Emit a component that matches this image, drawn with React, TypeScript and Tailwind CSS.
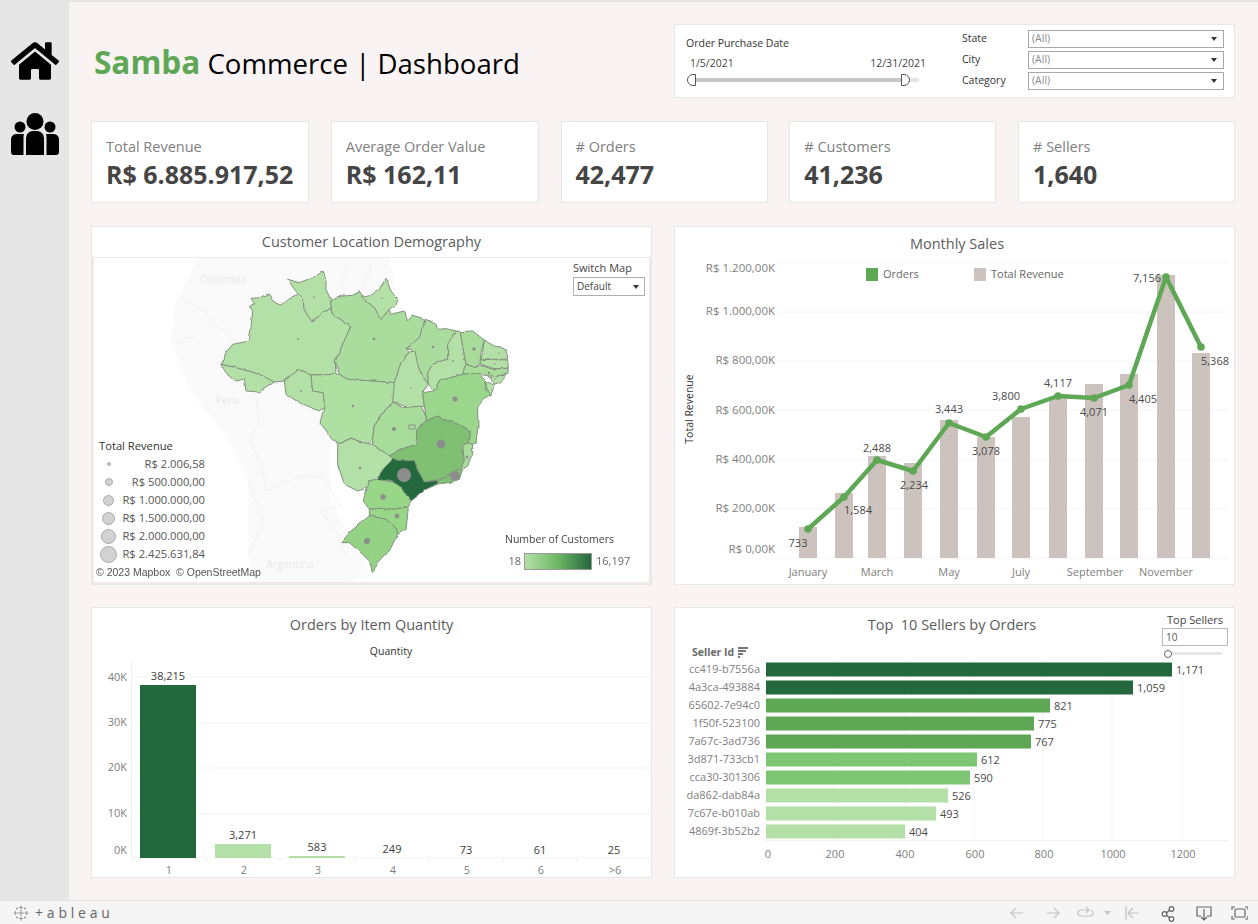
import { FaHome } from 'react-icons/fa';

const kpis = [
    { label: 'Total Revenue', value: 'R$ 6.885.917,52', w: 'w-[218px]' },
    { label: 'Average Order Value', value: 'R$ 162,11', w: 'w-[208px]' },
    { label: '# Orders', value: '42,477', w: 'w-[207px]' },
    { label: '# Customers', value: '41,236', w: 'w-[207px]' },
    { label: '# Sellers', value: '1,640', w: 'w-[217px]' },
];

const Caret = () => <span className="h-0 w-0 border-x-[3px] border-t-[4px] border-x-transparent border-t-[#333]" />;

const FilterSelect = ({ label }: { label: string }) => (
    <div className="flex h-[21px] items-center">
        <span className="w-[66px] text-[10.5px] text-[#333]">{label}</span>
        <div className="flex h-[18px] w-[196px] items-center justify-between border border-[#a8a8a8] pl-[3px] pr-[6px] text-[10.5px] text-[#8a8a8a]">
            <span className="pt-[1px]">(All)</span>
            <Caret />
        </div>
    </div>
);

const Handle = ({ flip }: { flip?: boolean }) => (
    <svg width="10" height="12" viewBox="0 0 10 12" className={flip ? '' : '-scale-x-100'}>
        <path d="M1.5.5h2.5a5 5 0 0 1 0 11H1.500z" fill="#fff" stroke="#555" />
    </svg>
);

const FilterBox = () => (
    <div className="flex h-[74px] w-[561px] border border-[#e6e6e6] bg-white">
        <div className="w-[287px] pl-[11px] pt-[11px]">
            <div className="text-[10.500px] leading-[14px] text-[#333]">Order Purchase Date</div>
            <div className="mt-[7px] flex w-[240px] justify-between pl-[4px] text-[10.500px] leading-[13px] text-[#444]">
                <span>1/5/2021</span>
                <span>12/31/2021</span>
            </div>
            <div className="relative mt-[8px] h-[4px] w-[226px] translate-x-[7px] bg-[#e6e6e6]">
                <div className="h-full w-[212px] bg-[#c8c8c8]" />
                <div className="absolute -left-[6px] -top-[4px] flex"><Handle /></div>
                <div className="absolute left-[207px] -top-[4px] flex"><Handle flip /></div>
            </div>
        </div>
        <div className="pt-[3px]">
            <FilterSelect label="State" />
            <FilterSelect label="City" />
            <FilterSelect label="Category" />
        </div>
    </div>
);

const Kpi = ({ label, value, w }: { label: string; value: string; w: string }) => (
    <div className={`h-[82px] border border-[#e6e6e6] bg-white pl-[14px] pt-[14px] ${w}`}>
        <div className="text-[14.500px] leading-[22px] text-[#808080]">{label}</div>
        <div className="text-[25px] font-bold leading-[33px] text-[#454545]">{value}</div>
    </div>
);

const Card = ({ title, titleH = 'h-[34px]', titlePad = '', h, children }: { title: string; titleH?: string; titlePad?: string; h: string; children: React.ReactNode }) => (
    <section className={`relative w-[561px] border border-[#e6e6e6] bg-white ${h}`}>
        <h2 className={`flex items-center justify-center whitespace-pre pb-[1px] text-[14.500px] font-normal text-[#5c5c5c] ${titleH} ${titlePad}`}>{title}</h2>
        {children}
    </section>
);

// state outlines traced from the reference, first group in one crop's coordinates, second in another
const northStates = [
    { f: '#b3e0a6', p: '105,97 135,95 160,87 170,105 195,117 215,100 250,87 262,100 265,135 287,165 310,150 345,125 350,145 405,180 358,285 360,325 285,327 265,320 245,310 205,345 175,348 130,325 60,305 15,295 30,260 50,235 100,225 105,180 110,135 100,122 115,112' },
    { f: '#b3e0a6', p: '15,295 60,305 130,325 175,348 130,378 90,375 85,340 60,345 30,320' },
    { f: '#b3e0a6', p: '215,40 250,50 290,35 318,18 330,45 330,70 345,103 345,125 310,150 287,165 265,135 262,100 250,87 235,70' },
    { f: '#b3e0a6', p: '435,90 470,85 490,70 510,37 525,75 545,100 540,115 520,130 495,160 475,125 450,105' },
    { f: '#aadd9d', p: '345,103 380,90 410,88 430,77 435,90 450,105 475,125 495,160 520,130 525,145 565,135 575,165 590,148 630,160 610,215 570,250 580,258 555,290 535,350 470,345 395,340 370,325 358,285 405,180 350,145 345,125' },
    { f: '#aadd9d', p: '630,160 660,175 665,190 690,188 722,195 695,235 695,280 650,295 635,320 637,355 615,325 605,295 585,250 570,250 610,215' },
    { f: '#b3e0a6', p: '580,258 597,255 605,295 615,325 637,355 620,380 625,420 595,430 565,420 530,410 530,370 535,350 555,290' },
    { f: '#b3e0a6', p: '722,195 733,197 740,240 750,295 740,325 705,335 670,345 655,375 637,355 635,320 650,295 695,280 695,235' },
    { f: '#a8dc9b', p: '733,197 770,195 805,222 795,260 792,295 780,305 750,295 740,240' },
    { f: '#b3e0a6', p: '805,222 835,240 865,245 875,270 875,280 835,280 795,278 800,260' },
    { f: '#b3e0a6', p: '792,280 875,282 877,305 845,310 825,305 795,295' },
    { f: '#a8dc9b', p: '750,295 780,305 795,298 825,308 877,308 875,325 840,330 820,330 790,325 765,322 740,325' },
    { f: '#b3e0a6', p: '825,330 870,328 855,350 835,358' },
    { f: '#b3e0a6', p: '810,345 835,358 825,385 810,370' },
    { f: '#9ad78c', p: '740,325 765,322 790,325 810,345 810,370 825,385 800,400 785,425 786,480 783,505 780,530 770,535 755,530 763,495 730,475 695,465 665,450 630,465 630,450 625,420 620,380 655,375 670,345 705,335' },
    { f: '#b3e0a6', p: '245,310 265,320 285,327 290,375 322,380 325,420 310,435 250,410 210,385 205,345' },
    { f: '#aee0a1', p: '285,327 360,325 370,325 395,340 535,350 530,410 510,429 474,480 471,516 456,534 405,516 375,531 360,531 312,471 325,420 322,380 290,375' },
];

const southStates = [
    { f: '#a8dc9b', p: '185,5 215,20 270,15 285,45 285,60 258,85 255,130 210,145 175,165 125,130 125,110 130,75 165,25' },
    { f: '#b3e0a6', p: '20,130 60,112 110,128 125,130 175,165 185,175 160,200 135,235 115,240 105,262 80,270 40,250 20,190' },
    { f: '#7fc073', p: '175,165 210,145 255,130 258,85 285,60 320,45 350,60 385,70 418,90 410,125 395,135 400,180 390,200 365,215 345,225 320,235 280,243 262,210 250,178 215,180 185,175' },
    { f: '#a8dc9b', p: '410,125 425,130 425,160 410,195 395,205 390,200 400,180 395,135' },
    { f: '#7fc073', p: '320,235 345,225 365,215 390,200 395,205 385,235 350,245 320,250' },
    { f: '#24693d', p: '185,175 215,180 250,178 262,210 280,243 320,238 318,250 285,265 260,285 240,300 205,255 185,243 135,235 160,200' },
    { f: '#98d688', p: '135,235 185,243 205,255 240,300 232,315 190,325 150,322 115,325 97,300 105,262 115,240' },
    { f: '#98d688', p: '115,325 150,322 190,325 232,318 228,360 225,385 200,400 195,380 165,355 115,345' },
    { f: '#94d385', p: '115,345 165,355 195,380 200,400 180,440 135,490 125,515 115,480 90,455 55,425 30,425 60,390 90,365' },
];

const revenueDots: [number, number, number][] = [
    [440, 443, 4.4], [403, 474, 7], [454, 475, 5], [382, 496, 2.7], [396, 515, 2.3], [366, 540, 3], [454, 398, 2.500], [393, 428, 2],
    [466, 456, 1.500], [359, 467, 1.200], [352, 405, 1.200], [373, 338, 1.300], [297, 338, 0.900], [473, 348, 1.800], [432, 346, 1.300],
    [452, 360, 0.900], [300, 390, 0.900], [313, 296, 0.800], [381, 297, 0.800], [244, 377, 0.500], [410, 387, 0.800], [488, 372, 1.300],
    [498, 352, 0.800], [494, 363, 0.800], [494, 378, 0.800], [486, 387, 0.800],
];

const sizeLegend = [
    { v: 'R$ 2.006,58', r: 'size-[4px]', pad: 'pl-[8px]' },
    { v: 'R$ 500.000,00', r: 'size-[8px]', pad: 'pl-[6px]' },
    { v: 'R$ 1.000.000,00', r: 'size-[11px]', pad: 'pl-[4px]' },
    { v: 'R$ 1.500.000,00', r: 'size-[13px]', pad: 'pl-[3px]' },
    { v: 'R$ 2.000.000,00', r: 'size-[15px]', pad: 'pl-[2px]' },
    { v: 'R$ 2.425.631,84', r: 'size-[17px]', pad: 'pl-[1px]' },
];

const MapPanel = () => (
    <div className="relative h-[327px] border-2 border-t border-[#efe9e9] overflow-hidden">
        <svg viewBox="93 257 557 324" width="557" height="324" className="block">
            <defs>
                <filter id="rough" x="-5%" y="-5%" width="110%" height="110%" colorInterpolationFilters="sRGB">
                    <feTurbulence type="fractalNoise" baseFrequency="0.11" numOctaves="2" seed="4" />
                    <feDisplacementMap in="SourceGraphic" scale="3" xChannelSelector="R" yChannelSelector="G" />
                </filter>
            </defs>
            <path d="M197 257 173 305 170 342 190 392 223 432 247 478 247 558 257 584H335L370 573 330 500V400L360 300 395 285 388 257Z" fill="#fafafa" />
            <g fill="none" stroke="#f1f1f1">
                <path d="M183 300 205 310 210 320 195 335 172 342M210 320 235 340 250 350" />
                <path d="M255 395 258 420 250 440 262 470 265 490 300 475 322 476 340 505 320 510 335 530 345 555" />
                <path d="M247 478 262 520 248 555M340 285 347 262M370 265 362 285" />
            </g>
            <g className="text-[10.500px]" fill="#e8e8e8">
                <text x="199" y="282">Colombia</text>
                <text x="215" y="403">Peru</text>
                <text x="265" y="567">Argentina</text>
            </g>
            <g filter="url(#rough)">
                <g stroke="#84907f" strokeWidth="3" strokeLinejoin="round" transform="translate(215 265) scale(0.3333)">
                    {northStates.map((s) => <polygon key={s.p} points={s.p} fill={s.f} />)}
                </g>
                <g stroke="#84907f" strokeWidth="3" strokeLinejoin="round" transform="translate(330 400) scale(0.3333)">
                    {southStates.map((s) => <polygon key={s.p} points={s.p} fill={s.f} />)}
                </g>
            </g>
            <rect x="408" y="424" width="6" height="4" fill="none" stroke="#888" strokeWidth="0.800" />
            {revenueDots.map(([x, y, r]) => <circle key={`${x}-${y}`} cx={x} cy={y} r={r} fill="#8d8d8d" />)}
        </svg>
        <div className="absolute left-[5px] top-[181px] w-[106px] text-[11.200px] text-[#555]">
            <div className="leading-[14px] text-[#333]">Total Revenue</div>
            <div className="mt-[2px]">
                {sizeLegend.map((row) => (
                    <div key={row.v} className={`flex h-[18px] items-center justify-between whitespace-nowrap ${row.pad}`}>
                        <span className={`rounded-full border border-[#aaa] bg-[#d2d2d2] ${row.r}`} />
                        <span>{row.v}</span>
                    </div>
                ))}
            </div>
        </div>
        <div className="absolute right-[4px] top-[3px] w-[72px] text-[11px] text-[#444]">
            <div className="leading-[14px]">Switch Map</div>
            <div className="mt-[2px] flex h-[19px] items-center justify-between border border-[#b0b0b0] bg-white px-[3px] pr-[5px] text-[10px]">
                Default
                <Caret />
            </div>
        </div>
        <div className="absolute left-[411px] top-[274px] text-[10.500px] text-[#444]">
            <div className="leading-[14px]">Number of Customers</div>
            <div className="mt-[7px] flex h-[17px] items-center text-[11px] text-[#666]">
                <span className="w-[16px] text-right">18</span>
                <span className="ml-[3px] mr-[4px] h-[17px] w-[68px] border border-[#999] bg-gradient-to-r from-[#b3e0a6] via-[#6cb665] to-[#24693d]" />
                <span>16,197</span>
            </div>
        </div>
        <div className="absolute bottom-[1px] left-[2px] font-['Liberation_Sans',sans-serif] text-[10.500px] text-[#555]">© 2023 Mapbox&nbsp; © OpenStreetMap</div>
    </div>
);

const months = [
    { x: 808, top: 527, ly: 529, n: '733', nx: 798, ny: 544 },
    { x: 844, top: 493, ly: 497, n: '1,584', nx: 858, ny: 511 },
    { x: 877, top: 456, ly: 460, n: '2,488', nx: 877, ny: 449 },
    { x: 913, top: 463, ly: 471, n: '2,234', nx: 914, ny: 486 },
    { x: 949, top: 420, ly: 423, n: '3,443', nx: 949, ny: 410 },
    { x: 986, top: 437, ly: 437, n: '3,078', nx: 986, ny: 452 },
    { x: 1021, top: 417, ly: 409, n: '3,800', nx: 1006, ny: 397 },
    { x: 1058, top: 397, ly: 396, n: '4,117', nx: 1058, ny: 384 },
    { x: 1094, top: 384, ly: 398, n: '4,071', nx: 1094, ny: 413 },
    { x: 1129, top: 374, ly: 385, n: '4,405', nx: 1143, ny: 400 },
    { x: 1166, top: 275, ly: 277, n: '7,156', nx: 1147, ny: 279 },
    { x: 1201, top: 353, ly: 347, n: '5,368', nx: 1215, ny: 362 },
];

const salesAxis = [
    { v: 'R$ 1.200,00K', label: 269, grid: 262 },
    { v: 'R$ 1.000,00K', label: 312, grid: 312 },
    { v: 'R$ 800,00K', label: 361, grid: 361 },
    { v: 'R$ 600,00K', label: 411, grid: 410 },
    { v: 'R$ 400,00K', label: 460, grid: 460 },
    { v: 'R$ 200,00K', label: 509, grid: 509 },
    { v: 'R$ 0,00K', label: 550, grid: 558 },
];

const MonthlySales = () => (
    <svg viewBox="675 261 559 323" width="559" height="323" className="block text-[11px]" dominantBaseline="middle">
        {salesAxis.map((a) => (
            <g key={a.v}>
                <line x1="776" x2="1229" y1={a.grid} y2={a.grid} stroke="#f4f4f4" />
                <text x="775" y={a.label} textAnchor="end" fill="#808080" className="text-[11.500px]">{a.v}</text>
            </g>
        ))}
        <text transform="translate(690 409) rotate(-90)" textAnchor="middle" fill="#333" className="text-[10.500px]">Total Revenue</text>
        {months.map((m) => <rect key={m.x} x={m.x - 9} y={m.top} width="18" height={558 - m.top} fill="#ccc3bf" />)}
        <polyline points={months.map((m) => `${m.x},${m.ly}`).join(' ')} fill="none" stroke="#5ea855" strokeWidth="4.500" strokeLinejoin="round" />
        {months.map((m) => <circle key={m.x} cx={m.x} cy={m.ly} r="3.800" fill="#5ea855" />)}
        {months.map((m) => <text key={m.n} x={m.nx} y={m.ny} textAnchor="middle" fill="#4a4a4a">{m.n}</text>)}
        {[['January', 808], ['March', 877], ['May', 949], ['July', 1021], ['September', 1095], ['November', 1166]].map(([t, x]) => (
            <text key={t} x={x} y="573" textAnchor="middle" fill="#808080">{t}</text>
        ))}
        <rect x="866" y="268" width="12" height="13" fill="#5ea855" />
        <text x="883" y="275" fill="#666">Orders</text>
        <rect x="974" y="268" width="12" height="13" fill="#ccc3bf" />
        <text x="991" y="275" fill="#666">Total Revenue</text>
    </svg>
);

const quantities = [
    { l: '1', x: 168, n: '38,215', top: 685, ny: 677, c: '#24693d' },
    { l: '2', x: 243, n: '3,271', top: 844, ny: 836, c: '#b3e0a6' },
    { l: '3', x: 317, n: '583', top: 856, ny: 848, c: '#b3e0a6' },
    { l: '4', x: 392, n: '249', top: 858, ny: 850, c: '#b3e0a6' },
    { l: '5', x: 466, n: '73', top: 858, ny: 851, c: '#b3e0a6' },
    { l: '6', x: 540, n: '61', top: 858, ny: 851, c: '#b3e0a6' },
    { l: '>6', x: 614, n: '25', top: 858, ny: 851, c: '#b3e0a6' },
];

const OrdersByQuantity = () => (
    <svg viewBox="92 642 559 235" width="559" height="235" className="block text-[11px]" dominantBaseline="middle">
        <text x="391" y="652" textAnchor="middle" fill="#333" className="text-[10.500px]">Quantity</text>
        <line x1="131.500" x2="131.500" y1="660" y2="858" stroke="#f0f0f0" />
        {[['40K', 677, 678], ['30K', 723, 723], ['20K', 768, 768], ['10K', 814, 814], ['0K', 858, 851]].map(([t, g, y]) => (
            <g key={t}>
                <line x1="132" x2="651" y1={g} y2={g} stroke="#f3f3f3" />
                <text x="127" y={y} textAnchor="end" fill="#808080">{t}</text>
            </g>
        ))}
        {[132, 206, 280, 355, 429, 503, 577].map((x) => <line key={x} x1={x} x2={x} y1="858" y2="862" stroke="#eeeeee" />)}
        {quantities.map((q) => (
            <g key={q.l}>
                <rect x={q.x - 28} y={q.top} width="56" height={858 - q.top} fill={q.c} />
                <text x={q.x} y={q.ny} textAnchor="middle" fill="#3c3c3c">{q.n}</text>
                <text x={q.x + 1} y="871" textAnchor="middle" fill="#808080">{q.l}</text>
            </g>
        ))}
    </svg>
);

const sellers = [
    { id: 'cc419-b7556a', n: '1,171', end: 1172, c: '#24693d' },
    { id: '4a3ca-493884', n: '1,059', end: 1133, c: '#24693d' },
    { id: '65602-7e94c0', n: '821', end: 1050, c: '#5ea855' },
    { id: '1f50f-523100', n: '775', end: 1034, c: '#5ea855' },
    { id: '7a67c-3ad736', n: '767', end: 1031, c: '#5ea855' },
    { id: '3d871-733cb1', n: '612', end: 977, c: '#7fc674' },
    { id: 'cca30-301306', n: '590', end: 970, c: '#7fc674' },
    { id: 'da862-dab84a', n: '526', end: 948, c: '#b3e0a6' },
    { id: '7c67e-b010ab', n: '493', end: 936, c: '#b3e0a6' },
    { id: '4869f-3b52b2', n: '404', end: 905, c: '#b3e0a6' },
];

const TopSellers = () => (
    <svg viewBox="675 642 559 235" width="559" height="235" className="block text-[11px]" dominantBaseline="middle">
        <text x="692" y="653" fill="#6a6a6a" className="font-bold text-[10.500px]">Seller Id</text>
        <path d="M738 648h10M738 651h8M738 654h5M738 657h2" stroke="#777" strokeWidth="1.800" />
        {[835, 905, 974, 1043, 1112, 1182].map((x) => <line key={x} x1={x} x2={x} y1="660" y2="840" stroke="#f3f3f3" />)}
        <line x1="766" x2="1229" y1="840.500" y2="840.500" stroke="#efefef" />
        {sellers.map((s, i) => {
            const y = 669.500 + i * 18;
            return (
                <g key={s.id}>
                    <text x="760" y={y + 1} textAnchor="end" fill="#808080">{s.id}</text>
                    <rect x="766" y={y - 7} width={s.end - 766} height="14" fill={s.c} />
                    <text x={s.end + 4} y={y + 2} fill="#4a4a4a">{s.n}</text>
                </g>
            );
        })}
        {[['0', 768], ['200', 835], ['400', 905], ['600', 975], ['800', 1044], ['1000', 1113], ['1200', 1183]].map(([t, x]) => (
            <text key={t} x={x} y="855" textAnchor="middle" fill="#808080">{t}</text>
        ))}
    </svg>
);

const TopSellersControl = () => (
    <div className="absolute right-[6px] top-[5px] w-[66px] text-[11px] text-[#444]">
        <div className="text-center leading-[14px]">Top Sellers</div>
        <div className="mt-[1px] flex h-[18px] items-center border border-[#b8b8b8] pl-[3px] text-[10px] text-[#555]">10</div>
        <div className="relative mt-[6px] ml-[9px] h-[3px] w-[51px] bg-[#e6e6e6]">
            <span className="absolute -left-[7px] -top-[2px] size-[8px] rounded-full border border-[#666] bg-white" />
        </div>
    </div>
);

const UsersIcon = () => (
    <svg width="48" height="42" viewBox="0 0 48 42" fill="#000">
        <circle cx="9" cy="14" r="5.500" />
        <circle cx="39" cy="14" r="5.500" />
        <circle cx="24" cy="8.500" r="8.500" />
        <path d="M0 26a6 6 0 0 1 6-5h7a12 12 0 0 0-.5 3v18H3a3 3 0 0 1-3-3zM48 26a6 6 0 0 0-6-5h-7a12 12 0 0 1 .5 3v18H45a3 3 0 0 0 3-3z" />
        <path d="M15 25a7 7 0 0 1 7-7h4a7 7 0 0 1 7 7v17H15z" />
    </svg>
);

const TableauMark = () => (
    <svg width="16" height="16" viewBox="0 0 16 16" stroke="#9a9a9a" strokeWidth="1" fill="none">
        <path d="M8 5v6M5 8h6M8 .5v4M6 2.500h4M8 11.500v4M6 13.500h4M.5 8h4M2.500 6v4M11.500 8h4M13.500 6v4M3 3.500h2M4 2.500v2M11 3.500h2M12 2.500v2M3 12.500h2M4 11.500v2M11 12.500h2M12 11.500v2" />
    </svg>
);

const Toolbar = () => (
    <footer className="flex h-[24px] items-center justify-between border-t border-[#e2e2e2] bg-[#f5f5f5] pl-[13px] pr-[10px]">
        <div className="flex items-center gap-[6px]">
            <TableauMark />
            <span className="text-[14px] leading-none tracking-[3.800px] text-[#666]">+ableau</span>
        </div>
        <svg width="238" height="20" viewBox="1010 902 238 20" fill="none" stroke="#c4c4c4" strokeWidth="1.200">
            <path d="M1023 912h-12m5-5-5 5 5 5" />
            <path d="M1047 912h12m-5-5 5 5-5 5" />
            <path d="M1088 909h-7a3 3 0 0 0 0 6h9a3 3 0 0 0 3-3v0a3 3 0 0 0-2-3M1086 906l3 3-3 3" />
            <path d="M1104 910h7l-3.500 4z" fill="#c4c4c4" stroke="none" />
            <path d="M1126 905v14M1139 912h-11m5-5-5 5 5 5" />
            <g stroke="#666">
                <circle cx="1164.500" cy="913" r="2.300" />
                <circle cx="1171.500" cy="908" r="2.300" />
                <circle cx="1171.500" cy="918" r="2.300" />
                <path d="M1166.500 912l3-3M1166.500 914l3 3" />
                <path d="M1201 915h-4v-9h14v9h-4M1204 908v11m-3-3 3 3 3-3" />
                <path d="M1232 909v-3h3M1245 906h3v3M1248 915v3h-3M1235 918h-3v-3" />
                <rect x="1235" y="908" width="10" height="8" rx="1" />
            </g>
        </svg>
    </footer>
);

const App = () => {
    return (
        <div className="flex h-[924px] w-[1258px] flex-col overflow-hidden bg-[#f9f3f3] font-['Open_Sans',sans-serif]">
            <div className="flex min-h-0 flex-1 border-t-2 border-[#e6e6e6]">
                <aside className="flex w-[69px] flex-col items-center bg-[#e6e6e6] pt-[35px]">
                    <FaHome size={48} color="#000" />
                    <div className="mt-[28px]"><UsersIcon /></div>
                </aside>
                <main className="flex-1 pl-[22px] pr-[23px] pt-[22px]">
                    <header className="flex h-[74px] items-center justify-between">
                        <h1 className="pl-[3px] pt-[2px] text-[27.600px] leading-none font-normal text-black">
                            <span className="text-[31.500px] font-bold text-[#5ea855]">Samba</span> Commerce | Dashboard
                        </h1>
                        <FilterBox />
                    </header>
                    <div className="mt-[23px] flex justify-between">
                        {kpis.map((k) => <Kpi key={k.label} {...k} />)}
                    </div>
                    <div className="mt-[23px] flex justify-between">
                        <Card title="Customer Location Demography" titleH="h-[30px]" h="h-[359px]"><MapPanel /></Card>
                        <Card title="Monthly Sales" titlePad="pl-[5px]" h="h-[359px]"><MonthlySales /></Card>
                    </div>
                    <div className="mt-[22px] flex justify-between">
                        <Card title="Orders by Item Quantity" h="h-[271px]"><OrdersByQuantity /></Card>
                        <Card title="Top  10 Sellers by Orders" titlePad="pr-[5px]" h="h-[271px]">
                            <TopSellersControl />
                            <TopSellers />
                        </Card>
                    </div>
                </main>
            </div>
            <Toolbar />
        </div>
    );
};

export default App;
